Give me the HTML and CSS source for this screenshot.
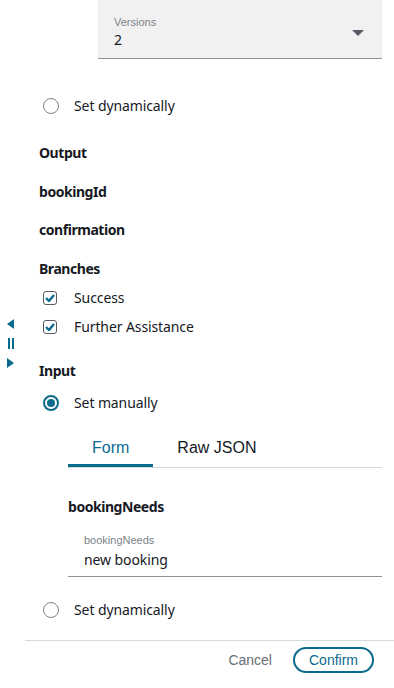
FILE: index.html
```html
<!DOCTYPE html>
<html lang="en">
<head>
    <meta charset="UTF-8">
    <meta name="viewport" content="width=device-width, initial-scale=1.0">
    <title>Step settings</title>
    <link rel="stylesheet" href="styles.css">
</head>
<body>
    <div class="rail">
        <svg class="rail-handle" width="25" height="50" viewBox="0 0 25 50">
            <polygon points="14,0 14,10 7,5" fill="#0b6b8f"/>
            <rect x="8" y="19" width="2" height="11" fill="#0b6b8f"/>
            <rect x="12" y="19" width="2" height="11" fill="#0b6b8f"/>
            <polygon points="7,39 7,49 14,44" fill="#0b6b8f"/>
        </svg>
    </div>
    <div class="panel">
        <div class="select">
            <div class="select-label">Versions</div>
            <div class="select-value">2</div>
            <span class="select-arrow"></span>
        </div>

        <label class="option first-option"><span class="radio"></span>Set dynamically</label>

        <div class="heading output">Output</div>
        <div class="heading field-name">bookingId</div>
        <div class="heading field-name">confirmation</div>

        <div class="heading branches">Branches</div>
        <label class="option check-row"><span class="checkbox"><svg width="10" height="8" viewBox="0 0 10 8"><path d="M1 4 L4 7 L9 1" fill="none" stroke="#0b6b8f" stroke-width="2.4"/></svg></span>Success</label>
        <label class="option check-row"><span class="checkbox"><svg width="10" height="8" viewBox="0 0 10 8"><path d="M1 4 L4 7 L9 1" fill="none" stroke="#0b6b8f" stroke-width="2.4"/></svg></span>Further Assistance</label>

        <div class="heading input-heading">Input</div>
        <label class="option manual"><span class="radio checked"></span>Set manually</label>

        <div class="form-block">
            <div class="tabs">
                <div class="tab active">Form</div>
                <div class="tab">Raw JSON</div>
            </div>
            <div class="heading needs">bookingNeeds</div>
            <div class="text-field">
                <div class="text-field-label">bookingNeeds</div>
                <div class="text-field-value">new booking</div>
            </div>
        </div>

        <label class="option last-option"><span class="radio"></span>Set dynamically</label>

        <div class="footer">
            <button class="cancel-btn">Cancel</button>
            <button class="confirm-btn">Confirm</button>
        </div>
    </div>
</body>
</html>
```

FILE: styles.css
```css
body {
    margin: 0;
    padding: 0;
    font-family: "Noto Sans", Arial, sans-serif;
    font-size: 14px;
    letter-spacing: -0.1px;
    color: #16191f;
    background-color: #fff;
    display: flex;
    height: 688px;
    overflow: hidden;
}
.rail {
    width: 25px;
    flex: none;
    display: flex;
    flex-direction: column;
    justify-content: center;
}
.rail-handle {
    display: block;
}
.panel {
    flex: 1;
    padding-left: 14px;
}
.select {
    position: relative;
    margin-left: 59px;
    margin-right: 12px;
    height: 58px;
    padding-left: 16px;
    background-color: #f1f1f1;
    border-bottom: 1px solid #8d9396;
    box-sizing: content-box;
}
.select-label {
    padding-top: 15px;
    font-family: "Liberation Sans", Arial, sans-serif;
    font-size: 11px;
    line-height: 14px;
    letter-spacing: 0;
    color: #7d8389;
}
.select-value {
    margin-top: 1px;
    font-size: 14px;
    line-height: 20px;
}
.select-arrow {
    position: absolute;
    right: 18px;
    top: 30px;
    width: 0;
    height: 0;
    border-left: 6px solid transparent;
    border-right: 6px solid transparent;
    border-top: 6px solid #545b64;
}
.option {
    display: flex;
    align-items: center;
    height: 20px;
    line-height: 20px;
    padding-left: 4px;
}
.radio {
    width: 14px;
    height: 14px;
    border: 1px solid #7d8389;
    border-radius: 50%;
    margin-right: 15px;
    flex: none;
    position: relative;
}
.radio.checked {
    border: 2px solid #0b6b8f;
    width: 12px;
    height: 12px;
}
.radio.checked::after {
    content: "";
    position: absolute;
    left: 2px;
    top: 2px;
    width: 8px;
    height: 8px;
    border-radius: 50%;
    background-color: #0b6b8f;
}
.checkbox {
    width: 12px;
    height: 12px;
    border: 1.5px solid #545b64;
    border-radius: 3px;
    margin-right: 17px;
    flex: none;
    display: flex;
    align-items: center;
    justify-content: center;
}
.heading {
    font-weight: bold;
    height: 20px;
    line-height: 20px;
    letter-spacing: -0.45px;
}
.first-option { margin-top: 37px; }
.output { margin-top: 27px; }
.field-name { margin-top: 19px; }
.field-name + .field-name { margin-top: 18px; }
.branches { margin-top: 19px; }
.check-row { margin-top: 9px; }
.input-heading { margin-top: 24px; }
.manual { margin-top: 12px; }
.form-block {
    margin-left: 29px;
    margin-right: 12px;
}
.tabs {
    display: flex;
    margin-top: 12px;
    border-bottom: 1px solid #d5dbdb;
}
.tab {
    font-family: "Liberation Sans", Arial, sans-serif;
    font-size: 16px;
    line-height: 20px;
    letter-spacing: 0;
    padding: 13px 24px 9px;
}
.tab.active {
    color: #0b6b8f;
    box-shadow: inset 0 -3px 0 #0b6b8f;
}
.needs { margin-top: 29px; }
.text-field {
    margin-top: 16px;
    padding: 0 0 6px 16px;
    border-bottom: 1px solid #8d9396;
}
.text-field-label {
    font-family: "Liberation Sans", Arial, sans-serif;
    font-size: 11px;
    line-height: 14px;
    letter-spacing: 0;
    color: #7d8389;
}
.text-field-value {
    margin-top: 3px;
    line-height: 20px;
}
.last-option { margin-top: 23px; }
.footer {
    margin-top: 20px;
    margin-left: -14px;
    border-top: 1px solid #d5dbdb;
    display: flex;
    justify-content: flex-end;
    align-items: center;
    padding: 6px 20px 0 0;
}
.cancel-btn, .confirm-btn {
    font-family: "Liberation Sans", Arial, sans-serif;
    font-size: 14px;
    background: none;
    cursor: pointer;
}
.cancel-btn {
    border: none;
    color: #687078;
    padding: 0;
    margin-right: 21px;
}
.confirm-btn {
    height: 26px;
    border: 2px solid #0b6b8f;
    border-radius: 14px;
    color: #0b6b8f;
    padding: 0 14px;
}
```
